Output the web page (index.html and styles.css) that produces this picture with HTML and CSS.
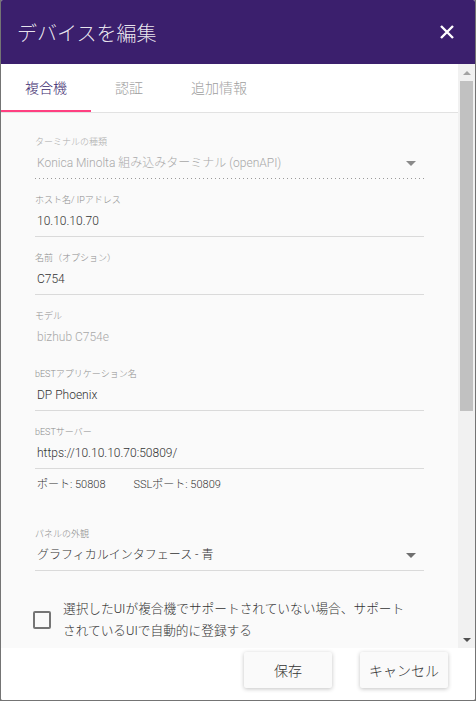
FILE: index.html
```html
<!DOCTYPE html>
<html lang="ja">
<head>
  <meta charset="UTF-8">
  <title>デバイスを編集</title>
  <link rel="stylesheet" href="styles.css">
</head>
<body>

<div class="dialog">
  <header class="dialog-head">
    <h1>デバイスを編集</h1>
    <svg class="close" viewBox="0 0 16 16"><path d="M2 2L14 14M14 2L2 14" stroke="#fff" stroke-width="2.4"/></svg>
  </header>

  <div class="dialog-main">
    <div class="pane">
      <nav class="tabs">
        <span class="tab active">複合機</span>
        <span class="tab">認証</span>
        <span class="tab">追加情報</span>
      </nav>

      <div class="form">
        <div class="field disabled">
          <label>ターミナルの種類</label>
          <div class="value select dotted">
            <span>Konica Minolta 組み込みターミナル (openAPI)</span>
            <i class="caret light"></i>
          </div>
        </div>

        <div class="field">
          <label>ホスト名/ IPアドレス</label>
          <div class="value">10.10.10.70</div>
        </div>

        <div class="field">
          <label>名前（オプション）</label>
          <div class="value">C754</div>
        </div>

        <div class="field readonly">
          <label>モデル</label>
          <div class="value">bizhub C754e</div>
        </div>

        <div class="field">
          <label>bESTアプリケーション名</label>
          <div class="value">DP Phoenix</div>
        </div>

        <div class="field tight">
          <label>bESTサーバー</label>
          <div class="value">https://10.10.10.70:50809/</div>
        </div>

        <div class="ports">
          <span>ポート: 50808</span>
          <span>SSLポート: 50809</span>
        </div>

        <div class="field">
          <label>パネルの外観</label>
          <div class="value select">
            <span>グラフィカルインタフェース - 青</span>
            <i class="caret"></i>
          </div>
        </div>

        <div class="check">
          <span class="box"></span>
          <span>選択したUIが複合機でサポートされていない場合、サポート<br>されているUIで自動的に登録する</span>
        </div>
      </div>
    </div>

    <div class="scrollbar">
      <span class="sb-btn up"></span>
      <div class="sb-track"><div class="thumb"></div></div>
      <span class="sb-btn down"></span>
    </div>
  </div>

  <footer class="dialog-foot">
    <button class="btn">保存</button>
    <button class="btn">キャンセル</button>
  </footer>
</div>

</body>
</html>
```

FILE: styles.css
```css
body {
  margin: 0;
  background: #747474;
  font-family: Roboto, "Noto Sans CJK JP", sans-serif;
  font-weight: 300;
  color: #333;
}
.dialog {
  width: 474px;
  height: 700px;
  margin-left: 1px;
  background: #fff;
  border-radius: 2px;
  overflow: hidden;
  display: flex;
  flex-direction: column;
}

/* header */
.dialog-head {
  height: 64px;
  flex: none;
  box-sizing: border-box;
  padding: 0 20px 0 16px;
  background: #3b1f6d;
  display: flex;
  align-items: center;
  justify-content: space-between;
}
.dialog-head h1 {
  margin: 0;
  font-size: 20px;
  font-weight: 300;
  color: rgba(255, 255, 255, 0.9);
}
.close { width: 16px; height: 16px; display: block; }

/* body + scrollbar */
.dialog-main { flex: 1; min-height: 0; display: flex; }
.pane { flex: 1; overflow: hidden; background: #fafafa; }

.tabs {
  display: flex;
  height: 48px;
  background: #fff;
  border-bottom: 1px solid #e2e2e2;
}
.tab {
  padding: 0 24px;
  font-size: 14px;
  line-height: 48px;
  color: #9e9e9e;
}
.tab.active { color: #3b1f6d; box-shadow: inset 0 -2px #ff4081; }

.form { padding: 23px 34px 0; }
.field { margin-bottom: 15px; }
.field label {
  display: block;
  font-size: 9px;
  line-height: 12px;
  color: #8c8c8c;
}
.field .value {
  margin-top: 5px;
  padding: 0 0 5px 2px;
  font-size: 12px;
  line-height: 20px;
  color: #333;
  border-bottom: 1px solid #dadada;
}
.field.disabled label { color: #ababab; }
.field.disabled .value, .field.readonly .value { color: #a8a8a8; }
.field.readonly .value { border-bottom-color: transparent; }
.field.tight { margin-bottom: 0; }

.value.select {
  display: flex;
  align-items: center;
  justify-content: space-between;
  padding-right: 8px;
}
.value.dotted {
  border-bottom: none;
  padding-bottom: 6px;
  background: linear-gradient(to right, #9a9a9a 1px, transparent 1px) 0 100% / 4px 1px repeat-x;
}
.caret {
  border-left: 5px solid transparent;
  border-right: 5px solid transparent;
  border-top: 5px solid #6f6f6f;
}
.caret.light { border-top-color: #8a8a8a; }

.ports {
  display: flex;
  gap: 28px;
  margin: 8px 0 35px;
  padding-left: 2px;
  font-size: 11px;
  line-height: 16px;
}

.check {
  display: flex;
  align-items: center;
  gap: 12px;
  margin: 27px 0 0 -2px;
  font-size: 12.7px;
  line-height: 22px;
}
.box {
  flex: none;
  width: 14px;
  height: 14px;
  border: 2px solid #757575;
  border-radius: 2px;
}

.scrollbar {
  flex: none;
  width: 17px;
  background: #f1f1f1;
  display: flex;
  flex-direction: column;
}
.sb-btn {
  height: 17px;
  flex: none;
  display: flex;
  align-items: center;
  justify-content: center;
}
.sb-btn::before {
  content: "";
  border-left: 4px solid transparent;
  border-right: 4px solid transparent;
}
.sb-btn.up::before { border-bottom: 4px solid #a3a3a3; }
.sb-btn.down::before { border-top: 4px solid #505050; }
.sb-track { flex: 1; padding: 0 2px; }
.thumb { height: 330px; background: #c1c1c1; }

/* footer */
.dialog-foot {
  height: 52px;
  flex: none;
  box-sizing: border-box;
  padding: 4px 27px 0 0;
  display: flex;
  justify-content: flex-end;
  align-items: flex-start;
  gap: 28px;
  background: #fff;
}
.btn {
  width: 88px;
  height: 36px;
  border: none;
  border-radius: 2px;
  background: #fafafa;
  box-shadow: 0 1px 4px rgba(0, 0, 0, 0.24);
  font: 300 14px Roboto, "Noto Sans CJK JP", sans-serif;
  color: #333;
}
```
